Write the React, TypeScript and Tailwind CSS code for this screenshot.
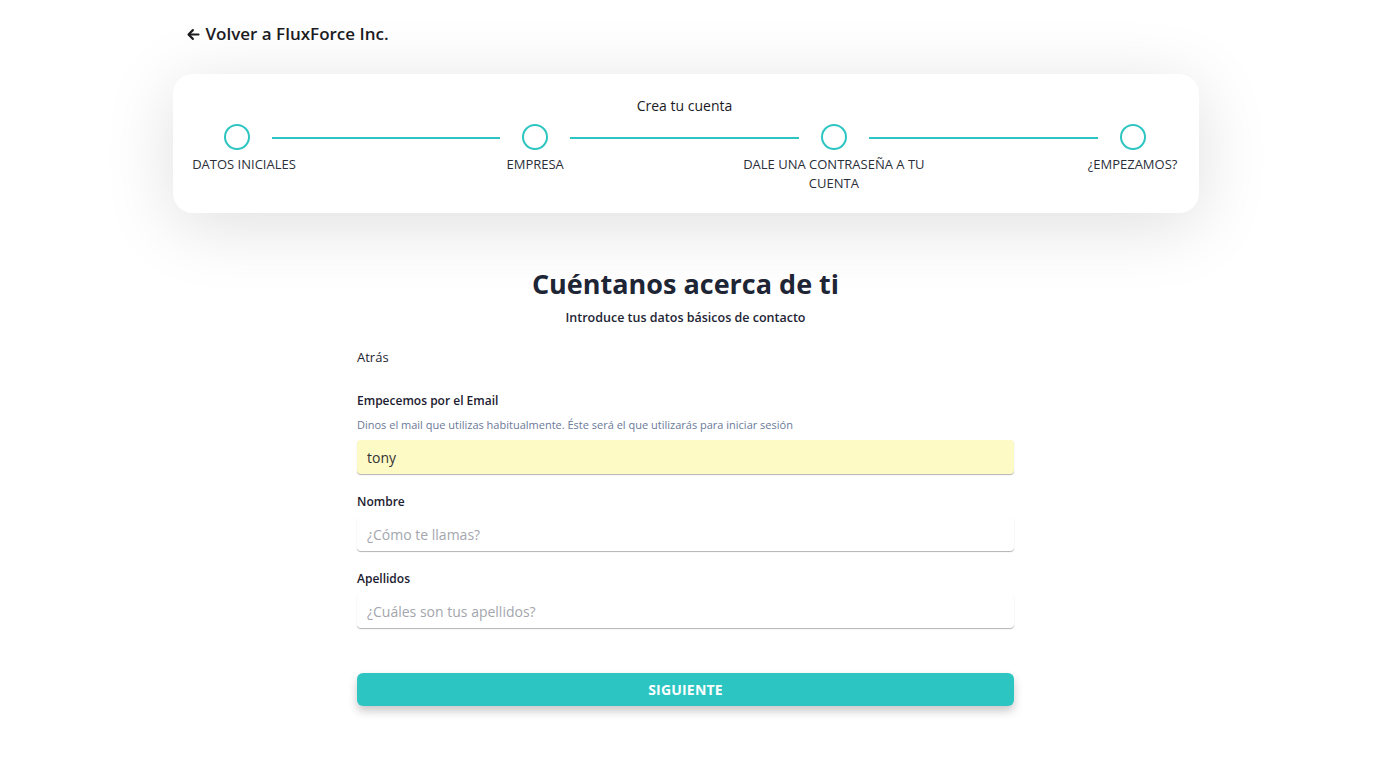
import React from 'react';

const steps = ['DATOS INICIALES', 'EMPRESA', 'DALE UNA CONTRASEÑA A TU CUENTA', '¿EMPEZAMOS?'];

function Step({ label, first }: { label: string; first?: boolean }) {
    return (
        <div className="flex w-[26px] shrink-0 flex-col items-center">
            <div className="h-[26px] w-[26px] rounded-full border-2 border-[#2cc5c2]" />
            <div
                className={`mt-[5px] w-[190px] shrink-0 text-center text-[13px] leading-[19px] text-[#2b2f3a] ${first ? 'ml-[15px]' : ''}`}
            >
                {label}
            </div>
        </div>
    );
}

function Field({ label, help, value, placeholder }: { label: string; help?: string; value?: string; placeholder: string }) {
    return (
        <div className="flex flex-col">
            <label className="text-[12px] font-semibold leading-[18px] text-[#1b2030]">{label}</label>
            {help && <p className="mt-[7px] text-[11px] leading-[16px] text-[#6b7a99]">{help}</p>}
            <input
                defaultValue={value}
                placeholder={placeholder}
                className={`h-[34px] w-full rounded-[4px] px-[10px] text-[14px] text-[#333] outline-none placeholder:text-[#a3a6ad] shadow-[0_1px_1px_rgba(0,0,0,0.3)] ${help ? 'mt-[7px]' : 'mt-[6px]'} ${value ? 'bg-[#fefac6]' : 'bg-white'}`}
            />
        </div>
    );
}

export default function App() {
    return (
        <div className="min-h-screen bg-white pr-[17px] font-['Open_Sans',sans-serif]">
            <div className="mx-auto w-[1026px]">
                <a href="#" className="ml-[13px] flex h-[68px] items-center gap-[5px] text-[17px] font-semibold text-[#1b1b1f]">
                    <svg width="15" height="15" viewBox="0 0 24 24" fill="none" stroke="currentColor" strokeWidth="3.4" strokeLinecap="round" strokeLinejoin="round">
                        <path d="M20 12H5" />
                        <path d="M11 5l-7 7 7 7" />
                    </svg>
                    Volver a FluxForce Inc.
                </a>

                <div className="mt-[6px] rounded-[20px] bg-white pb-[20px] pl-[51px] pr-[53px] pt-[22px] shadow-[0_12px_70px_rgba(0,0,0,0.13)]">
                    <p className="text-center text-[14px] leading-[20px] text-[#1b1b1f]">Crea tu cuenta</p>
                    <div className="mt-[8px] flex items-start">
                        {steps.map((s, i) => (
                            <React.Fragment key={s}>
                                {i > 0 && <div className="mx-[22px] mt-[13px] h-[2px] flex-1 bg-[#2cc5c2]" />}
                                <Step label={s} first={i === 0} />
                            </React.Fragment>
                        ))}
                    </div>
                </div>
            </div>

            <div className="mx-auto mt-[55px] flex w-[657px] flex-col">
                <h1 className="text-center text-[27px] font-bold leading-[32px] text-[#1e2534]">Cuéntanos acerca de ti</h1>
                <p className="mt-[9px] text-center text-[12.5px] font-semibold leading-[18px] text-[#1e2534]">
                    Introduce tus datos básicos de contacto
                </p>
                <button className="mt-[20px] self-start text-[13px] font-medium leading-[20px] text-[#1e2534]">Atrás</button>

                <div className="mt-[25px] flex flex-col gap-[19px]">
                    <Field
                        label="Empecemos por el Email"
                        help="Dinos el mail que utilizas habitualmente. Éste será el que utilizarás para iniciar sesión"
                        value="tony"
                        placeholder=""
                    />
                    <Field label="Nombre" placeholder="¿Cómo te llamas?" />
                    <Field label="Apellidos" placeholder="¿Cuáles son tus apellidos?" />
                </div>

                <button className="mt-[45px] h-[33px] w-full rounded-[6px] bg-[#2cc5c2] text-[14px] font-bold tracking-[0.2px] text-white shadow-[0_5px_10px_rgba(0,0,0,0.22)]">
                    SIGUIENTE
                </button>
            </div>
        </div>
    );
}
